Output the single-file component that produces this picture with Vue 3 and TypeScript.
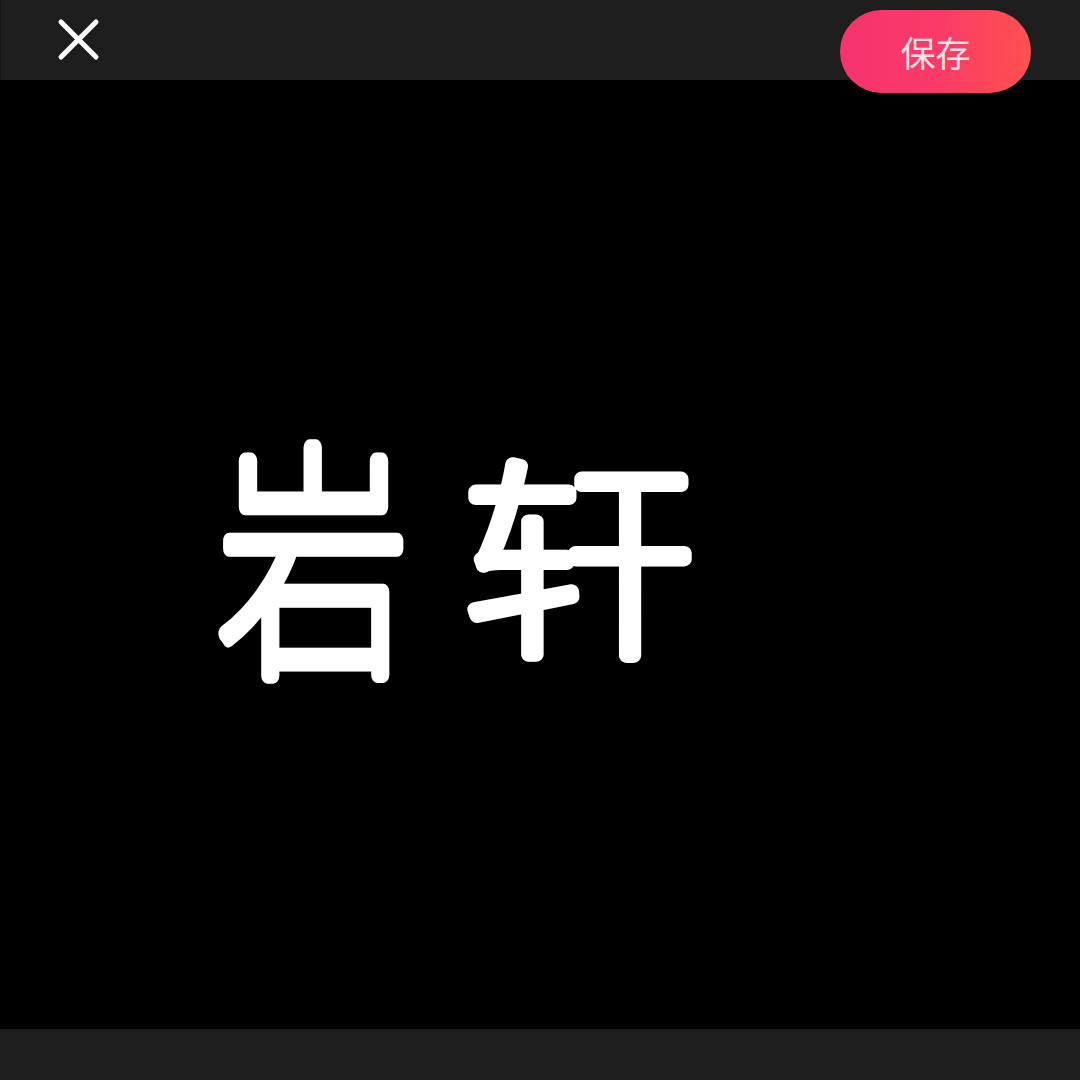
<script setup lang="ts">
const title = '保存'
</script>

<template>
  <div class="page">
    <header class="top">
      <svg class="close" viewBox="0 0 44 44" width="44" height="44" aria-label="关闭">
        <path d="M4 4 L39 39 M39 4 L4 39" />
      </svg>
      <button class="save">{{ title }}</button>
    </header>
    <main class="canvas">
      <svg class="art" viewBox="0 0 500 260" width="500" height="260">
        <text class="glyph" transform="translate(0 232) scale(.84 1.11)">岩</text>
        <text class="glyph" transform="translate(245 216) scale(1.03 .94)">轩</text>
      </svg>
    </main>
    <footer class="bottom"></footer>
  </div>
</template>

<style>
html, body { margin: 0; background: #000; }
</style>

<style scoped>
.page {
  position: relative;
  width: 1080px;
  height: 1080px;
  display: flex;
  flex-direction: column;
  background: #000;
  overflow: hidden;
  font-family: "Noto Sans CJK SC", "Liberation Sans", sans-serif;
}
.top {
  height: 80px;
  flex: none;
  background: #1e1e1e;
  box-sizing: border-box;
  padding-left: 56px;
  padding-top: 18px;
  border-left: 1px solid #141414;
}
.close { display: block; }
.close path {
  fill: none;
  stroke: #fff;
  stroke-width: 5;
  stroke-linecap: round;
}
.save {
  position: absolute;
  left: 840px;
  top: 10px;
  width: 191px;
  height: 83px;
  border: 0;
  padding: 0;
  border-radius: 42px;
  background: linear-gradient(90deg, #f6336e 0%, #fa3a68 50%, #ff5150 100%);
  color: #f7e3e6;
  font-family: inherit;
  font-size: 35px;
  line-height: 83px;
}
.canvas {
  flex: 1;
  display: flex;
  align-items: center;
  padding-left: 218px;
  min-height: 0;
}
.art { display: block; overflow: visible; flex: none; }
.glyph {
  font-family: "Noto Sans CJK SC", sans-serif;
  font-size: 226px;
  font-weight: 100;
  fill: #fff;
  stroke: #fff;
  stroke-width: 15;
  stroke-linejoin: round;
  stroke-linecap: round;
}
.bottom {
  height: 51px;
  flex: none;
  background: #1e1e1e;
}
</style>
